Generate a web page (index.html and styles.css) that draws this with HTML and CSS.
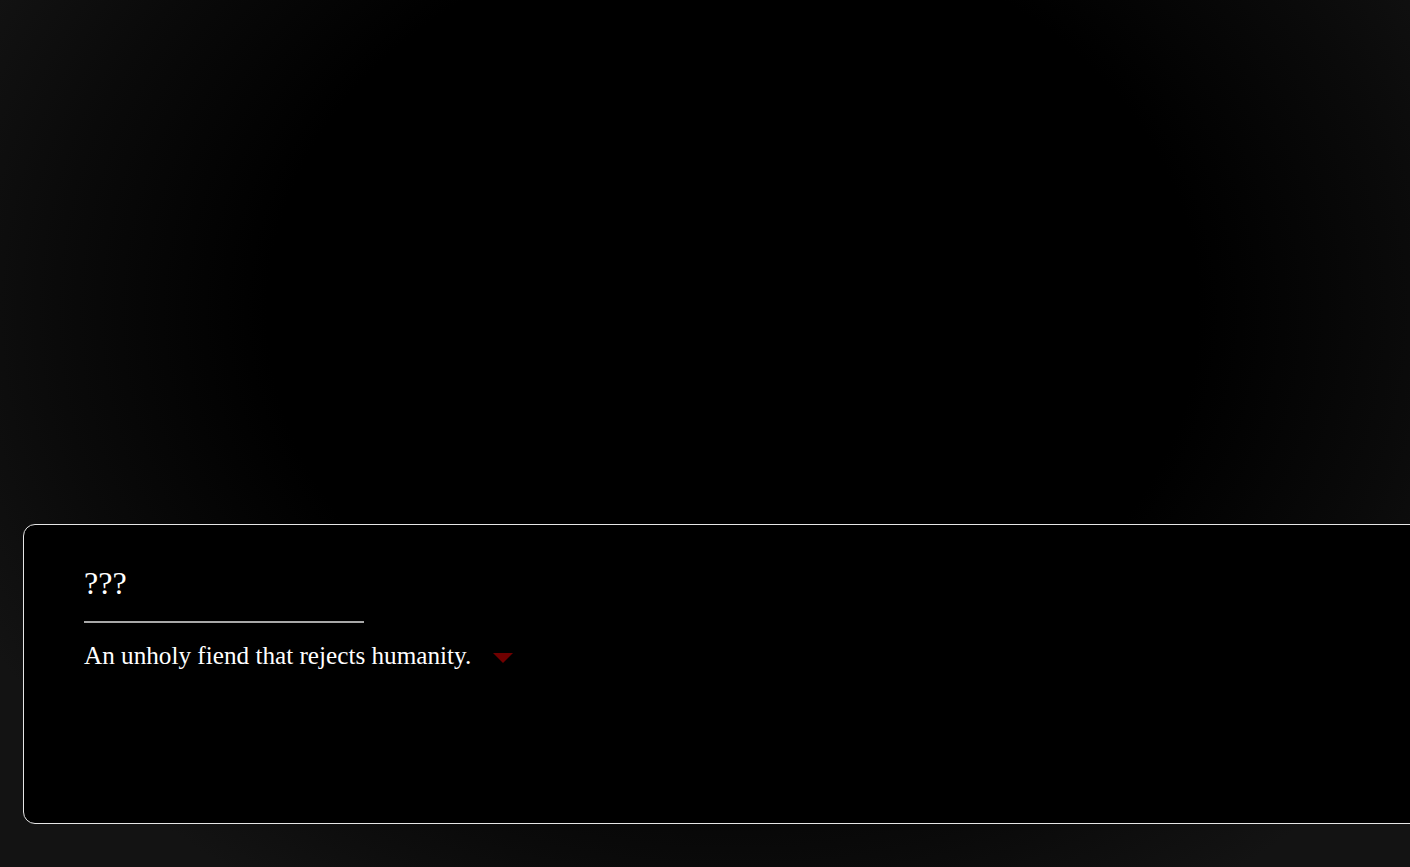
FILE: index.html
```html
<!DOCTYPE html>
<html lang="en">
<head>
<meta charset="utf-8">
<title>Dialogue</title>
<link rel="stylesheet" href="styles.css">
</head>
<body>
<main class="scene">
  <section class="dialog">
    <h2 class="speaker">???</h2>
    <hr class="divider">
    <p class="line">An unholy fiend that rejects humanity.<span class="more"></span></p>
  </section>
</main>
</body>
</html>
```
FILE: styles.css
```css
html, body {
  margin: 0;
  padding: 0;
  height: 100%;
  overflow: hidden;
}
body {
  background: #0c0c0c;
  font-family: "Liberation Serif", "Times New Roman", serif;
  color: #fff;
}
.scene {
  height: 867px;
  display: flex;
  flex-direction: column;
  justify-content: flex-end;
  padding: 0 0 43px 23px;
  box-sizing: border-box;
  background: radial-gradient(ellipse 60% 80% at 52% 36%, #000 55%, #0a0a0a 80%, #131313 100%);
}
.dialog {
  width: 1440px;
  height: 300px;
  box-sizing: border-box;
  border: 1px solid #e6e6e6;
  border-radius: 12px;
  background: #000;
  padding: 40px 60px;
  flex-shrink: 0;
}
.speaker {
  margin: 0;
  font-size: 32px;
  font-weight: normal;
  line-height: normal;
}
.divider {
  width: 280px;
  margin: 19px 0 19px 0;
  border: 0;
  height: 2px;
  background: #a8a8a8;
}
.line {
  margin: 0;
  font-size: 25.2px;
  line-height: normal;
}
.more {
  display: inline-block;
  width: 0;
  height: 0;
  margin-left: 22px;
  border-left: 10px solid transparent;
  border-right: 10px solid transparent;
  border-top: 10px solid #700000;
  vertical-align: 1px;
}
```
